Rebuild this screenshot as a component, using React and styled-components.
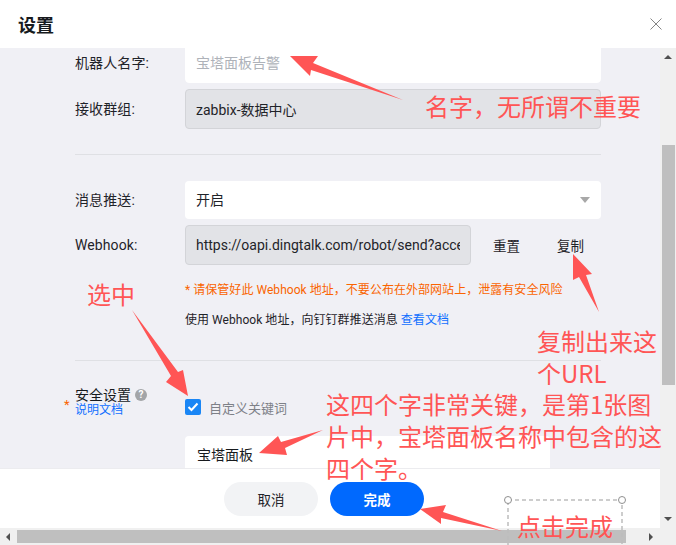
import styled, { createGlobalStyle } from "styled-components";

const GlobalStyle = createGlobalStyle`
  html, body {
    margin: 0;
    padding: 0;
    background: #fff;
  }
  * {
    box-sizing: border-box;
  }
`;

const sans = `Roboto, "Noto Sans CJK SC", sans-serif`;

const Dialog = styled.div`
  position: relative;
  width: 676px;
  height: 545px;
  overflow: hidden;
  display: flex;
  flex-direction: column;
  background: #fff;
  font-family: ${sans};
  font-size: 14px;
  color: #1f2329;
`;

const Header = styled.header`
  flex: 0 0 48px;
  display: flex;
  align-items: center;
  justify-content: space-between;
  padding: 0 14px 0 18px;
`;

const Title = styled.h1`
  margin: 0;
  font-size: 18px;
  font-weight: 700;
  color: #171a1d;
`;

const Close = styled.button`
  border: 0;
  padding: 0;
  width: 12px;
  height: 12px;
  display: flex;
  background: none;
`;

const Middle = styled.div`
  flex: 1;
  min-height: 0;
  display: flex;
`;

const Main = styled.div`
  flex: 1;
  min-width: 0;
  display: flex;
  flex-direction: column;
`;

const Body = styled.div`
  flex: 1;
  min-height: 0;
  overflow: hidden;
  background: #f0f0f5;
`;

const Form = styled.div`
  margin-top: -5px;
  padding: 0 59px 0 75px;
  display: flex;
  flex-direction: column;
`;

const Row = styled.div`
  display: flex;
  align-items: center;
  margin-bottom: ${(p) => p.$gap ?? 6}px;
`;

const Label = styled.label`
  flex: 0 0 110px;
  line-height: 20px;
  letter-spacing: 0.1px;
`;

const Field = styled.input`
  width: ${(p) => p.$width || "416px"};
  height: 40px;
  padding: 0 10px;
  border-radius: 4px;
  outline: 0;
  font-family: ${sans};
  font-size: 14px;
  color: #1f2329;
  background: ${(p) => (p.disabled ? "#e2e3e7" : "#fff")};
  border: 1px solid ${(p) => (p.disabled ? "#d3d4d8" : "#fff")};
  &::placeholder {
    color: #aeb2b9;
  }
  &:disabled {
    opacity: 1;
    -webkit-text-fill-color: #1f2329;
  }
`;

const Divider = styled.hr`
  width: 100%;
  margin: ${(p) => p.$top}px 0 ${(p) => p.$bottom}px;
  border: 0;
  border-top: 1px solid #dfe0e4;
`;

const Select = styled.div`
  width: 416px;
  height: 38px;
  padding: 0 11px 2px;
  display: flex;
  align-items: center;
  justify-content: space-between;
  background: #fff;
  border-radius: 4px;
`;

const Caret = styled.span`
  width: 0;
  height: 0;
  margin-top: 2px;
  border-left: 5px solid transparent;
  border-right: 5px solid transparent;
  border-top: 6px solid #a8a8a8;
`;

const TextButton = styled.button`
  border: 0;
  padding: 0;
  background: none;
  font-family: ${sans};
  font-size: 13.5px;
  color: #1f2329;
  margin-left: ${(p) => p.$left}px;
`;

const Note = styled.p`
  margin: ${(p) => p.$top}px 0 0 110px;
  font-size: 12px;
  line-height: 18px;
  letter-spacing: 0.04px;
  white-space: nowrap;
  color: ${(p) => p.$color || "#1f2329"};
`;

const DocLink = styled.a`
  color: #0f6fff;
`;

const SecurityRow = styled.div`
  display: flex;
  align-items: flex-start;
`;

const SecurityLabel = styled.div`
  position: relative;
  flex: 0 0 110px;
  display: flex;
  flex-direction: column;
  line-height: 15px;
`;

const Required = styled.span`
  position: absolute;
  left: -11px;
  top: 10px;
  color: #fa6400;
  font-size: 13px;
`;

const LabelTop = styled.span`
  display: flex;
  align-items: center;
  gap: 4px;
  height: 16px;
  font-size: 14px;
  color: #171a1d;
`;

const Hint = styled.span`
  width: 12px;
  height: 12px;
  border-radius: 50%;
  background: #a3a5a8;
  color: #fff;
  font-size: 10px;
  font-weight: 700;
  line-height: 12px;
  text-align: center;
`;

const SmallLink = styled(DocLink)`
  font-size: 12px;
`;

const CheckLine = styled.div`
  display: flex;
  align-items: center;
  gap: 8px;
  margin-top: 12px;
  height: 16px;
  font-size: 13px;
  color: #7d8087;
`;

const Checkbox = styled.span`
  width: 16px;
  height: 16px;
  display: flex;
  align-items: center;
  justify-content: center;
  border-radius: 2px;
  background: #1a86f5;
`;

const KeywordBox = styled.div`
  width: 365px;
  height: 40px;
  margin: 18px 0 0 110px;
  padding: 0 12px 4px;
  display: flex;
  align-items: center;
  background: #fff;
  border-radius: 4px;
  color: #171a1d;
`;

const Footer = styled.footer`
  flex: 0 0 60px;
  display: flex;
  align-items: center;
  gap: 12px;
  padding-left: 224px;
  background: #fff;
  border-top: 1px solid #ececef;
`;

const PillButton = styled.button`
  width: 94px;
  height: 34px;
  border: 0;
  border-radius: 17px;
  font-family: ${sans};
  font-size: 13.5px;
  font-weight: ${(p) => (p.$primary ? 700 : 400)};
  color: ${(p) => (p.$primary ? "#fff" : "#1f2329")};
  background: ${(p) => (p.$primary ? "#0069fe" : "#f2f3f5")};
`;

const VScroll = styled.div`
  flex: 0 0 16px;
  display: flex;
  flex-direction: column;
  align-items: center;
  justify-content: space-between;
  padding: 7px 0;
  background: #f0f0f0;
`;

const VTrack = styled.div`
  flex: 1;
  width: 13px;
  padding-top: 86px;
`;

const VThumb = styled.div`
  height: 240px;
  background: #bfbfbf;
`;

const HScroll = styled.div`
  flex: 0 0 17px;
  display: flex;
  align-items: center;
  padding: 0 23px 0 6px;
  background: #f0f0f0;
`;

const HTrack = styled.div`
  flex: 1;
  height: 13px;
  padding: 0 23px 0 7px;
`;

const HThumb = styled.div`
  height: 13px;
  background: #bfbfbf;
`;

const Tri = styled.span`
  width: 0;
  height: 0;
  flex: none;
  border: 4px solid transparent;
  ${(p) => p.$dir === "up" && "border-top: 0; border-bottom: 4px solid #505050;"}
  ${(p) => p.$dir === "down" && "border-bottom: 0; border-top: 4px solid #505050;"}
  ${(p) => p.$dir === "left" && "border-left: 0; border-right: 4px solid #505050;"}
  ${(p) => p.$dir === "right" && "border-right: 0; border-left: 4px solid #505050;"}
`;

const Arrows = styled.svg`
  position: absolute;
  inset: 0;
  pointer-events: none;
`;

const Note24 = styled.div`
  position: absolute;
  left: ${(p) => p.$x}px;
  top: ${(p) => p.$y}px;
  width: ${(p) => p.$w || "auto"};
  font-family: "Noto Sans CJK SC", sans-serif;
  font-size: 24px;
  line-height: ${(p) => p.$lh || 32}px;
  color: #ff5555;
  white-space: pre-line;
`;

const arrows = [
  "290,56 318,56 313,63 403,100 311,70 310,76",
  "132,310 171,376 166,382 188,396 183,370 178,372",
  "573,254 592,274 586,275 599,312 579,277 573,280",
  "259,453 278,436 281,442 323,430 285,448 287,455",
  "420,509 446,505 443,512 502,531 441,518 441,524",
];

export default function App() {
  return (
    <>
      <GlobalStyle />
      <Dialog>
        <Header>
          <Title>设置</Title>
          <Close aria-label="关闭">
            <svg width="12" height="12" viewBox="0 0 12 12">
              <path d="M.5.5l11 11M11.5.5l-11 11" stroke="#858585" strokeWidth="1" fill="none" />
            </svg>
          </Close>
        </Header>
        <Middle>
          <Main>
            <Body>
              <Form>
                <Row>
                  <Label>机器人名字:</Label>
                  <Field placeholder="宝塔面板告警" readOnly />
                </Row>
                <Row>
                  <Label>接收群组:</Label>
                  <Field disabled value="zabbix-数据中心" />
                </Row>
                <Divider $top={19} $bottom={26} />
                <Row>
                  <Label>消息推送:</Label>
                  <Select>
                    开启
                    <Caret />
                  </Select>
                </Row>
                <Row $gap={0}>
                  <Label>Webhook:</Label>
                  <Field
                    $width="286px"
                    disabled
                    value="https://oapi.dingtalk.com/robot/send?access_token="
                  />
                  <TextButton $left={22}>重置</TextButton>
                  <TextButton $left={37}>复制</TextButton>
                </Row>
                <Note $top={16} $color="#fa6400">
                  * 请保管好此 Webhook 地址，不要公布在外部网站上，泄露有安全风险
                </Note>
                <Note $top={12}>
                  使用 Webhook 地址，向钉钉群推送消息 <DocLink>查看文档</DocLink>
                </Note>
                <Divider $top={31} $bottom={26} />
                <SecurityRow>
                  <SecurityLabel>
                    <Required>*</Required>
                    <LabelTop>
                      安全设置 <Hint>?</Hint>
                    </LabelTop>
                    <SmallLink>说明文档</SmallLink>
                  </SecurityLabel>
                  <CheckLine>
                    <Checkbox>
                      <svg width="12" height="10" viewBox="0 0 12 10">
                        <path d="M1.5 5l3 3 6-6.5" stroke="#fff" strokeWidth="2" fill="none" />
                      </svg>
                    </Checkbox>
                    自定义关键词
                  </CheckLine>
                </SecurityRow>
                <KeywordBox>宝塔面板</KeywordBox>
              </Form>
            </Body>
            <Footer>
              <PillButton>取消</PillButton>
              <PillButton $primary>完成</PillButton>
            </Footer>
          </Main>
          <VScroll>
            <Tri $dir="up" />
            <VTrack>
              <VThumb />
            </VTrack>
            <Tri $dir="down" />
          </VScroll>
        </Middle>
        <HScroll>
          <Tri $dir="left" />
          <HTrack>
            <HThumb />
          </HTrack>
          <Tri $dir="right" />
        </HScroll>

        <Arrows width="676" height="545" viewBox="0 0 676 545">
          {arrows.map((points) => (
            <polygon key={points} points={points} fill="#ff5555" />
          ))}
          <rect x="508" y="500" width="114" height="60" fill="none" stroke="#bdbdbd" strokeWidth="1.5" strokeDasharray="4 3" />
          <circle cx="508" cy="500" r="3.5" fill="#fff" stroke="#8f8f8f" />
          <circle cx="622" cy="500" r="3.5" fill="#fff" stroke="#8f8f8f" />
        </Arrows>
        <Note24 $x={425} $y={90}>名字，无所谓不重要</Note24>
        <Note24 $x={87} $y={278}>选中</Note24>
        <Note24 $x={537} $y={325}>{"复制出来这\n个URL"}</Note24>
        <Note24 $x={326} $y={388} $w="340px">
          {"这四个字非常关键，是第1张图\n片中，宝塔面板名称中包含的这\n四个字。"}
        </Note24>
        <Note24 $x={517} $y={510}>点击完成</Note24>
      </Dialog>
    </>
  );
}
